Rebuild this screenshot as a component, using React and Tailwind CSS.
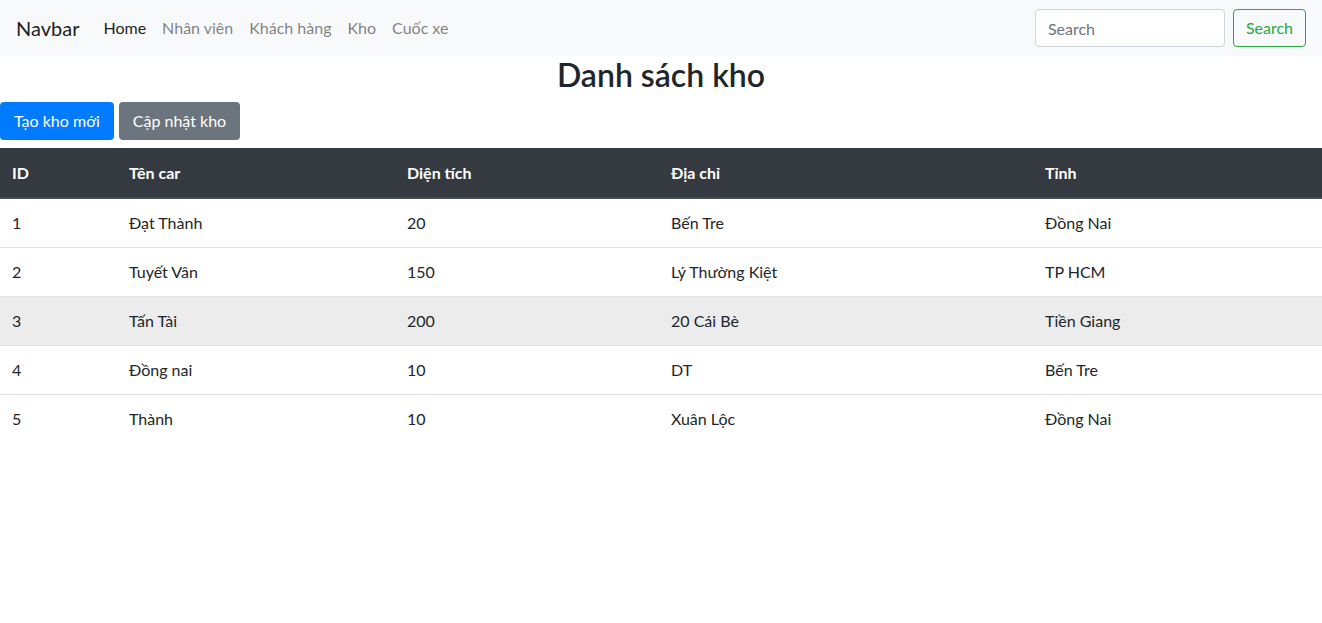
import React from 'react';

const rows = [
  { id: 1, name: 'Đạt Thành', area: '20', address: 'Bến Tre', province: 'Đồng Nai' },
  { id: 2, name: 'Tuyết Vân', area: '150', address: 'Lý Thường Kiệt', province: 'TP HCM' },
  { id: 3, name: 'Tấn Tài', area: '200', address: '20 Cái Bè', province: 'Tiền Giang', hover: true },
  { id: 4, name: 'Đồng nai', area: '10', address: 'DT', province: 'Bến Tre' },
  { id: 5, name: 'Thành', area: '10', address: 'Xuân Lộc', province: 'Đồng Nai' },
];

const links = ['Home', 'Nhân viên', 'Khách hàng', 'Kho', 'Cuốc xe'];

const App = () => {
  return (
    <div className="min-h-screen bg-white text-[#212529] text-base leading-6 font-['Lato','Noto_Sans',sans-serif]">
      <nav className="flex items-center justify-between h-14 px-4 bg-[#f8f9fa]">
        <div className="flex items-center">
          <a className="text-xl leading-[30px] mr-4 text-black/90">Navbar</a>
          <ul className="flex">
            {links.map((l, i) => (
              <li key={l}>
                <a className={`block px-2 py-2 ${i === 0 ? 'text-black/90' : 'text-black/50'}`}>{l}</a>
              </li>
            ))}
          </ul>
        </div>
        <form className="flex items-center">
          <input
            type="search"
            placeholder="Search"
            className="w-[190px] h-[38px] px-3 mr-2 bg-white border border-[#ced4da] rounded text-[#495057] placeholder:text-[#6c757d] outline-none"
          />
          <button type="button" className="h-[38px] px-3 border border-[#28a745] text-[#28a745] rounded">
            Search
          </button>
        </form>
      </nav>

      <h2 className="text-[32px] leading-[38px] font-semibold text-center mb-2">Danh sách kho</h2>

      <div className="flex gap-[5px] mb-2">
        <button className="h-[38px] px-[14px] bg-[#007bff] text-white rounded">Tạo kho mới</button>
        <button className="h-[38px] px-[14px] bg-[#6c757d] text-white rounded">Cập nhật kho</button>
      </div>

      <table className="w-full border-collapse text-left">
        <thead>
          <tr className="bg-[#343a40] text-white">
            <th className="w-[117px] px-3 pt-[13px] pb-3 font-bold border-b-2 border-[#454d55]">ID</th>
            <th className="w-[278px] px-3 pt-[13px] pb-3 font-bold border-b-2 border-[#454d55]">Tên car</th>
            <th className="w-[264px] px-3 pt-[13px] pb-3 font-bold border-b-2 border-[#454d55]">Diện tích</th>
            <th className="w-[374px] px-3 pt-[13px] pb-3 font-bold border-b-2 border-[#454d55]">Địa chỉ</th>
            <th className="px-3 pt-[13px] pb-3 font-bold border-b-2 border-[#454d55]">Tỉnh</th>
          </tr>
        </thead>
        <tbody>
          {rows.map((r) => (
            <tr key={r.id} className={`border-t border-[#dee2e6] ${r.hover ? 'bg-[#ececec]' : ''}`}>
              <td className="p-3">{r.id}</td>
              <td className="p-3">{r.name}</td>
              <td className="p-3">{r.area}</td>
              <td className="p-3">{r.address}</td>
              <td className="p-3">{r.province}</td>
            </tr>
          ))}
        </tbody>
      </table>
    </div>
  );
};

export default App;
